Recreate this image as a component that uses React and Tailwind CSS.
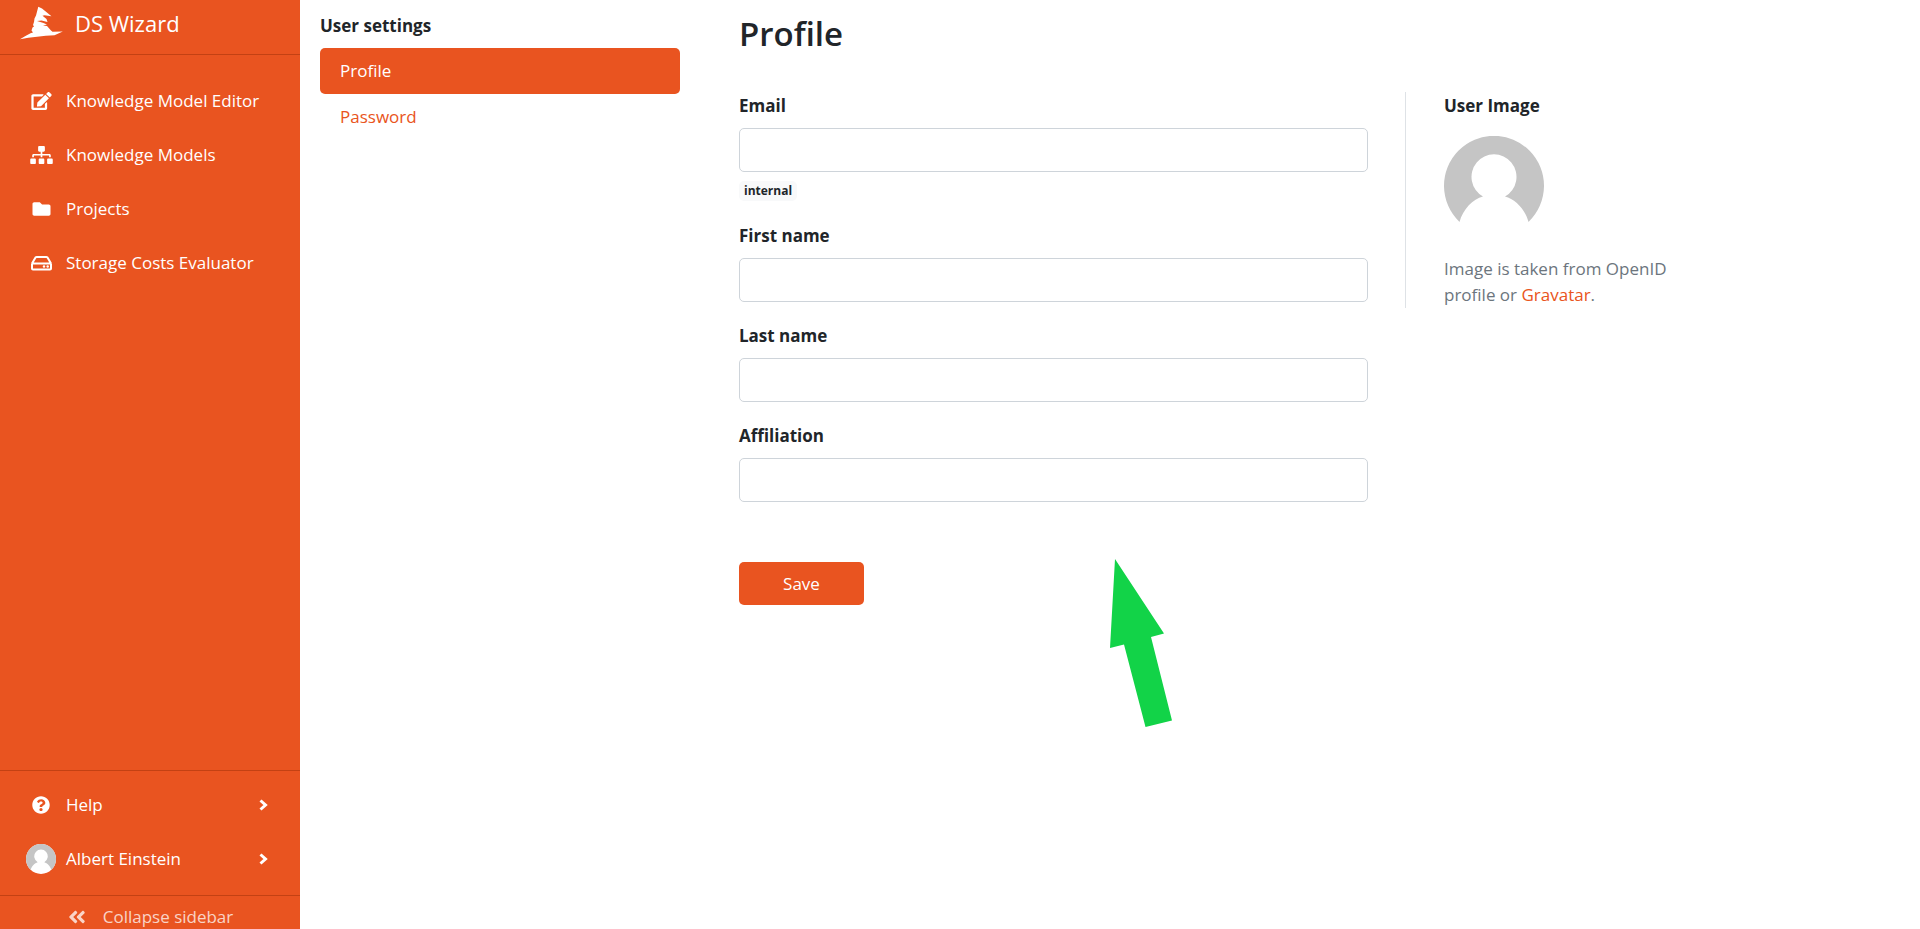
import React from 'react';
import {
  FaEdit,
  FaSitemap,
  FaFolder,
  FaQuestionCircle,
  FaAngleDoubleLeft,
} from 'react-icons/fa';

const Logo = () => (
  <svg viewBox="0 0 44 34" className="w-11 h-[34px]" fill="currentColor" aria-hidden="true">
    <path d="M19.300 .7 L23 2.500 L32.500 10.300 L25.500 9.300 L23.500 9.800 L27.500 13 L28.500 16 L22.500 14.500 L18 15 L24.500 17 L28 18.500 L24 19.500 L28 20 L32 24.500 L33.500 25.800 L43.800 25.600 L35.500 29.300 C24 29.500 12 31.500 1 33.200 L6 30.200 L11.500 27.200 L14 26.500 L12.500 24.500 L13.500 21.500 L15 20.500 L14 19 L15 16 L15.500 12.500 L17 9.500 Z" />
  </svg>
);

const DriveIcon = ({ className }) => (
  <svg viewBox="0 0 22 18" className={className} aria-hidden="true">
    <path
      d="M1.500 9.500 V14.500 Q1.500 15.500 2.500 15.500 H19.500 Q20.500 15.500 20.500 14.500 V9.500 M1.500 9.500 L5 3.500 Q5.500 3 6.200 3 H15.800 Q16.500 3 17 3.500 L20.500 9.500 M1.500 9.500 H20.500"
      fill="none"
      stroke="currentColor"
      strokeWidth="2"
      strokeLinejoin="round"
    />
    <circle cx="13.500" cy="12.500" r="1.200" fill="currentColor" />
    <circle cx="17.200" cy="12.500" r="1.200" fill="currentColor" />
  </svg>
);

const Chevron = () => (
  <svg viewBox="0 0 9 12" className="ml-auto w-[9px] h-3" aria-hidden="true">
    <path d="M1.500 1.500 L6.500 6 L1.500 10.500" fill="none" stroke="currentColor" strokeWidth="3" />
  </svg>
);

const Avatar = ({ className }) => (
  <svg viewBox="0 0 100 100" className={className} aria-hidden="true">
    <circle cx="50" cy="50" r="50" fill="#fff" />
    <path d="M15.500 86 A50 50 0 1 1 84.500 86 C81 73 71 63 61 60.500 A22.500 22.500 0 1 0 39 60.500 C29 63 19 73 15.500 86 Z" fill="#c5c5c5" />
  </svg>
);

const menuItems = [
  { label: 'Knowledge Model Editor', icon: FaEdit },
  { label: 'Knowledge Models', icon: FaSitemap },
  { label: 'Projects', icon: FaFolder },
  { label: 'Storage Costs Evaluator', icon: DriveIcon },
];

const Sidebar = () => (
  <aside className="w-[300px] shrink-0 flex flex-col bg-[#e95420] text-white">
    <a href="#" className="flex items-center h-[55px] px-[19px] pb-2 gap-3 border-b border-[#c34113] text-[22px]">
      <Logo />
      DS Wizard
    </a>
    <nav className="flex-1 pt-[19px]">
      {menuItems.map(({ label, icon: Icon }) => (
        <a key={label} href="#" className="flex items-center h-[54px] pl-[30px] gap-[13px]">
          <Icon className="w-[23px] h-[18px]" />
          {label}
        </a>
      ))}
    </nav>
    <div className="border-t border-[#c34113] pt-[7px] pb-[9px]">
      <button className="flex items-center w-full h-[54px] pl-[26px] pr-8 gap-[10px]">
        <span className="w-[30px] flex justify-center">
          <FaQuestionCircle className="w-[18px] h-[18px]" />
        </span>
        Help
        <Chevron />
      </button>
      <button className="flex items-center w-full h-[54px] pl-[26px] pr-8 gap-[10px]">
        <Avatar className="w-[30px] h-[30px]" />
        Albert Einstein
        <Chevron />
      </button>
    </div>
    <button className="flex items-center justify-center h-[34px] pt-2 gap-4 border-t border-[#c34113] text-white/75">
      <FaAngleDoubleLeft className="w-5 h-5" />
      Collapse sidebar
    </button>
  </aside>
);

const SettingsNav = () => (
  <nav className="w-[360px] shrink-0 pt-3">
    <h2 className="font-bold leading-7 mb-2">User settings</h2>
    <a href="#" className="flex items-center h-[46px] px-5 rounded-[5px] bg-[#e95420] text-white">
      Profile
    </a>
    <a href="#" className="flex items-center h-[46px] px-5 text-[#e95420]">
      Password
    </a>
  </nav>
);

const Field = ({ id, label, type = 'text', badge }) => (
  <div>
    <label htmlFor={id} className="block font-bold leading-7 mb-2">
      {label}
    </label>
    <input
      id={id}
      type={type}
      className="block w-full h-11 px-4 border border-[#ced4da] rounded-[5px] bg-white"
    />
    {badge && (
      <span className="inline-block mt-[9px] px-[5px] rounded-[5px] bg-[#f8f9fa] text-xs leading-5 font-bold">
        {badge}
      </span>
    )}
  </div>
);

const Arrow = () => (
  <svg viewBox="0 0 63 169" className="absolute left-[371px] top-[467px] w-[63px] h-[169px]" aria-hidden="true">
    <path d="M5 0 L54 74.500 L41 78 L62 161.500 L35.500 168 L14 85.500 L0 89 Z" fill="#12d348" />
  </svg>
);

const App = () => {
  return (
    <div className="flex min-h-screen bg-white text-[#212529] text-[17px] leading-[26px] font-['Open_Sans','Noto_Sans',sans-serif]">
      <Sidebar />
      <main className="flex-1 flex items-start gap-[59px] px-5">
        <SettingsNav />
        <section className="flex-1 max-w-[960px] pt-3">
          <h1 className="text-[33px] leading-[44px] font-semibold mb-9">Profile</h1>
          <div className="flex items-start">
            <form className="relative flex-1 pr-[37px]">
              <div className="flex flex-col gap-5">
                <Field id="email" label="Email" type="email" badge="internal" />
                <Field id="firstName" label="First name" />
                <Field id="lastName" label="Last name" />
                <Field id="affiliation" label="Affiliation" />
              </div>
              <button type="button" className="mt-[60px] w-[125px] h-[43px] rounded-[5px] bg-[#e95420] text-white">
                Save
              </button>
              <Arrow />
            </form>
            <div className="w-[294px] border-l border-[#dee2e6] pl-[38px]">
              <h2 className="font-bold leading-7 mb-4">User Image</h2>
              <Avatar className="w-[100px] h-[100px]" />
              <p className="mt-5 text-[#6c757d]">
                Image is taken from OpenID profile or{' '}
                <a href="#" className="text-[#e95420]">Gravatar</a>.
              </p>
            </div>
          </div>
        </section>
      </main>
    </div>
  );
};

export default App;
